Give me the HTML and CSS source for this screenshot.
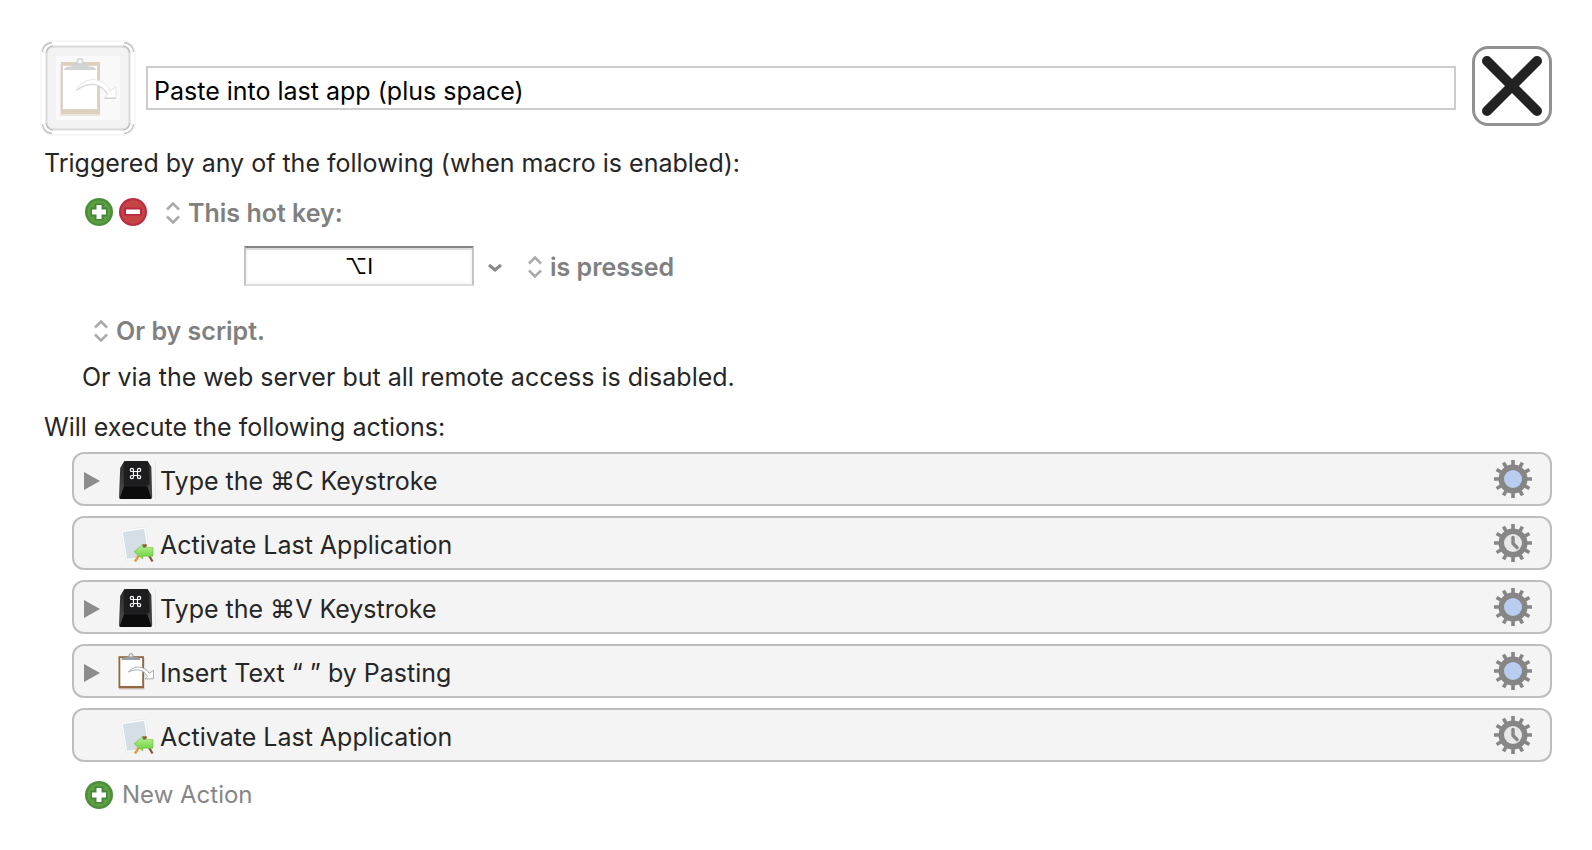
FILE: index.html
```
<!DOCTYPE html>
<html lang="en">
<head>
<meta charset="utf-8">
<title>Macro Editor</title>
<link rel="stylesheet" href="styles.css">
</head>
<body>
<svg class="defs" aria-hidden="true">
  <defs>
    <linearGradient id="arrowGreen" x1="0" y1="0" x2="0" y2="1">
      <stop offset="0" stop-color="#c6f2a0"/><stop offset=".5" stop-color="#8fe063"/><stop offset="1" stop-color="#66d038"/>
    </linearGradient>
    <linearGradient id="keySide" x1="0" y1="0" x2="0" y2="1">
      <stop offset="0" stop-color="#2c2c2d"/><stop offset="1" stop-color="#4c4c4d"/>
    </linearGradient>
    <symbol id="plus" viewBox="0 0 28 28">
      <circle cx="14" cy="14" r="14" fill="#4a8f3b"/>
      <circle cx="14" cy="14" r="11.5" fill="#5f9f41"/>
      <path d="M9.5 5.500h9v4h4v9h-4v4h-9v-4h-4v-9h4z" fill="#43883a"/>
      <path d="M11.500 7h5v4.500H21v5h-4.500V21h-5v-4.500H7v-5h4.500z" fill="#fff"/>
    </symbol>
    <symbol id="minus" viewBox="0 0 28 28">
      <circle cx="14" cy="14" r="14" fill="#ba2c43"/>
      <circle cx="14" cy="14" r="11.800" fill="#c54545"/>
      <path d="M5 9.500h18v8H5z" fill="#b7293f"/>
      <path d="M7 11.500h14v4.500H7z" fill="#fff"/>
    </symbol>
    <symbol id="updown" viewBox="0 0 14 22">
      <path d="M1 7.500l6-6 6 6M1 14.500l6 6 6-6" fill="none" stroke="#aaa" stroke-width="2.500"/>
    </symbol>
    <symbol id="gear" viewBox="-19 -19 38 38">
      <g stroke="#868686" stroke-width="3.600">
        <path id="spokes" d="M0-19V19M-19 0H19"/>
        <use href="#spokes" transform="rotate(30)"/>
        <use href="#spokes" transform="rotate(60)"/>
      </g>
      <circle r="14.500" fill="#868686"/>
    </symbol>
    <symbol id="gear-blue" viewBox="-19 -19 38 38">
      <use href="#gear" x="-19" y="-19" width="38" height="38"/>
      <circle r="9" fill="#bacdf0"/>
    </symbol>
    <symbol id="gear-clock" viewBox="-19 -19 38 38">
      <use href="#gear" x="-19" y="-19" width="38" height="38"/>
      <circle r="9" fill="#e8e8e8"/>
      <path d="M0-5.500V0.500l4 4" fill="none" stroke="#868686" stroke-width="3.400" stroke-linecap="round" stroke-linejoin="round"/>
    </symbol>
    <symbol id="key" viewBox="0 0 38 40">
      <path d="M7.500 0h21q1.500 0 2 1.200L33.300 6l.9 30q0 2-2 2H3q-2 0-2-2L2.200 7 5.500 1.200Q6 0 7.500 0z" fill="url(#keySide)"/>
      <path d="M7 23h21.500l5 14.300q-.5.700-1.500.7H3q-1 0-1.500-.7z" fill="#0c0c0d"/>
      <path d="M8 0h20q2 0 2.300 2l1.400 20q0 2.500-2.500 2.500H8.300Q5.500 24.500 5.700 22L6 2q.2-2 2-2z" fill="#1d1d1f"/>
      <path d="M7 24.800h23" stroke="#343436" stroke-width=".8"/>
      <path d="M15.500 10.500v-1.600a1.600 1.600 0 1 0-1.600 1.600h7.200a1.600 1.600 0 1 0-1.600-1.600v7.200a1.600 1.600 0 1 0 1.600-1.600h-7.200a1.600 1.600 0 1 0 1.600 1.600z" fill="none" stroke="#fff" stroke-width="1.200"/>
      <path d="M37.500 0v38" stroke="#e7e7e7"/>
    </symbol>
    <symbol id="activate" viewBox="0 0 38 40">
      <path d="M3 5.500L27.500 2 32 32.500 8 36z" fill="#fff" stroke="#e4e4e4" stroke-width=".6"/>
      <path d="M4.800 7L26.200 4l4.300 27L9 34z" fill="#d3dfe4"/>
      <path d="M28 19.500L17 36.500" stroke="#e79a36" stroke-width="2.400"/>
      <path d="M24.500 19.500l10 17" stroke="#87572e" stroke-width="2.200"/>
      <path d="M28 19.500l-1.500 2.300" stroke="#87572e" stroke-width="2.400"/>
      <path d="M16 26.800l8.800-7v2.600H35v8.800H24.800v2.800z" fill="url(#arrowGreen)" stroke="#6cbd47" stroke-width=".6"/>
    </symbol>
    <symbol id="clipboard" viewBox="0 0 38 40">
      <path d="M1 4h25.500v32.500H1z" fill="#8c7357" opacity=".35"/>
      <path d="M.5 3.200H26v32H.5z" fill="#93683c"/>
      <path d="M2.300 5h21.900v28H2.300z" fill="#fff"/>
      <path d="M3.500 7q0-2.800 4-2.800 3 0 3.200-1.700h4.600q.2 1.700 3.200 1.700 4 0 4 2.800z" fill="#999ea3"/>
      <circle cx="13" cy="2.400" r="1.900" fill="#e5e7e9" stroke="#9da2a6" stroke-width="1"/>
      <path d="M10.300 19C16 12 26.500 12.500 31.200 20.300l4.300-3v8.500h-8.500l2.500-2.500C25 16 18 15.500 10.300 19z" fill="#fff" stroke="#999" stroke-width=".8" stroke-linejoin="round"/>
    </symbol>
  </defs>
</svg>

<main class="editor">
  <header class="header">
    <button class="macro-icon" aria-label="Macro icon">
      <svg viewBox="0 0 96 96" aria-hidden="true">
        <rect x="1" y="1" width="94" height="94" rx="11" fill="#fff" stroke="#efefef"/>
        <rect x="6.500" y="6.500" width="83" height="83" rx="7" fill="#f3f3f3" stroke="#dadada" stroke-width="2"/>
        <path d="M2.500 12q1-8.500 9.500-9.500M84 2.500q8.500 1 9.500 9.500M93.500 84q-1 8.500-9.500 9.500M12 93.500q-8.500-1-9.500-9.500M6 13q1-6 7-7M83 6q6 1 7 7M90 83q-1 6-7 7M13 90q-6-1-7-7" fill="none" stroke="#c2c2c2" stroke-width="1.500"/>
        <rect x="16" y="16" width="64" height="64" fill="#f9f9f9"/>
        <path d="M20 24h40v52H20z" fill="#e9e6e2"/>
        <path d="M21 22h39v52H21z" fill="#dfcfbe"/>
        <path d="M22.500 25.500h35v44h-35z" fill="#fff" stroke="#d5d0ca" stroke-width=".8"/>
        <path d="M24 30q0-3.500 6-3.500 5 0 6-4h8q1 4 6 4 6 0 6 3.500z" fill="#d1d3d4"/>
        <circle cx="40" cy="21.500" r="2.800" fill="#f6f6f6" stroke="#d0d2d3" stroke-width="1.400"/>
        <path d="M36 51C43 38 62 36 70.500 52l5.500-4.500V59H64l3.500-4C60 43 50 42 36 51z" fill="#cfcfcf"/>
        <path d="M36 50C43 37 62 35 70.500 51l5.500-4.500V57.800H64.500l3.500-3.500C60 42 50 41 36 50z" fill="#fff" stroke="#dedede" stroke-width=".8"/>
      </svg>
    </button>
    <input class="macro-name" type="text" aria-label="Macro name" value="Paste into last app (plus space)">
    <button class="close" aria-label="Close">
      <svg viewBox="0 0 60 60" aria-hidden="true"><path d="M5 5l50 50M55 5L5 55" stroke="#222" stroke-width="10" stroke-linecap="round"/></svg>
    </button>
  </header>

  <section class="triggers">
    <h2 class="heading">Triggered by any of the following (when macro is enabled):</h2>
    <div class="trigger-row">
      <button class="round" aria-label="Add trigger"><svg aria-hidden="true"><use href="#plus"/></svg></button>
      <button class="round" aria-label="Remove trigger"><svg aria-hidden="true"><use href="#minus"/></svg></button>
      <label class="popup popup-type">
        <svg aria-hidden="true"><use href="#updown"/></svg>
        <select aria-label="Trigger type"><option>This hot key:</option></select>
      </label>
    </div>
    <div class="hotkey-row">
      <input class="hotkey" type="text" aria-label="Hot key" value="⌥I">
      <button class="chevron" aria-label="Hot key options">
        <svg viewBox="0 0 14 10" aria-hidden="true"><path d="M1 2l6 5 6-5" fill="none" stroke="#888" stroke-width="3"/></svg>
      </button>
      <label class="popup">
        <svg aria-hidden="true"><use href="#updown"/></svg>
        <select aria-label="Hot key event"><option>is pressed</option></select>
      </label>
    </div>
    <div class="script-row">
      <label class="popup">
        <svg aria-hidden="true"><use href="#updown"/></svg>
        <select aria-label="Script trigger"><option>Or by script.</option></select>
      </label>
    </div>
    <p class="web-note">Or via the web server but all remote access is disabled.</p>
  </section>

  <section class="execution">
    <h2 class="heading">Will execute the following actions:</h2>
    <ul class="actions">
      <li class="action">
        <button class="disclose" aria-label="Show details"></button>
        <svg class="action-icon" aria-hidden="true"><use href="#key"/></svg>
        <span class="action-title">Type the ⌘C Keystroke</span>
        <button class="gear" aria-label="Action options"><svg aria-hidden="true"><use href="#gear-blue"/></svg></button>
      </li>
      <li class="action">
        <svg class="action-icon" aria-hidden="true"><use href="#activate"/></svg>
        <span class="action-title">Activate Last Application</span>
        <button class="gear" aria-label="Action options"><svg aria-hidden="true"><use href="#gear-clock"/></svg></button>
      </li>
      <li class="action">
        <button class="disclose" aria-label="Show details"></button>
        <svg class="action-icon" aria-hidden="true"><use href="#key"/></svg>
        <span class="action-title">Type the ⌘V Keystroke</span>
        <button class="gear" aria-label="Action options"><svg aria-hidden="true"><use href="#gear-blue"/></svg></button>
      </li>
      <li class="action">
        <button class="disclose" aria-label="Show details"></button>
        <svg class="action-icon" aria-hidden="true"><use href="#clipboard"/></svg>
        <span class="action-title">Insert Text “ ” by Pasting</span>
        <button class="gear" aria-label="Action options"><svg aria-hidden="true"><use href="#gear-blue"/></svg></button>
      </li>
      <li class="action">
        <svg class="action-icon" aria-hidden="true"><use href="#activate"/></svg>
        <span class="action-title">Activate Last Application</span>
        <button class="gear" aria-label="Action options"><svg aria-hidden="true"><use href="#gear-clock"/></svg></button>
      </li>
    </ul>
    <button class="new-action">
      <svg aria-hidden="true"><use href="#plus"/></svg>
      New Action
    </button>
  </section>
</main>
</body>
</html>
```
FILE: styles.css
```
* {
  box-sizing: border-box;
}

body {
  margin: 0;
  background: #fff;
  color: #262626;
  font: 25px/32px Inter, "Liberation Sans", sans-serif;
}

button,
input,
select {
  margin: 0;
  padding: 0;
  border: 0;
  background: none;
  color: inherit;
  font: inherit;
}

svg {
  display: block;
}

.defs {
  position: absolute;
  width: 0;
  height: 0;
}

.editor {
  padding: 40px;
}

.header {
  display: flex;
  align-items: center;
}

.macro-icon,
.macro-icon svg {
  width: 96px;
  height: 96px;
}

.macro-name {
  flex: 1;
  min-width: 0;
  height: 44px;
  margin: 0 16px 0 10px;
  padding: 6px 6px 0;
  border: 2px solid #ccc;
  color: #000;
}

.close {
  display: grid;
  place-items: center;
  width: 80px;
  height: 80px;
  margin-bottom: 4px;
  border: 3px solid #929292;
  border-radius: 16px;
}

.close svg {
  width: 60px;
  height: 60px;
}

.heading {
  margin: 11px 0 0 4px;
  font-size: 25px;
  font-weight: 400;
}

.trigger-row,
.hotkey-row,
.script-row {
  display: flex;
  align-items: center;
}

.trigger-row {
  gap: 6px;
  margin: 16px 0 0 45px;
}

.round svg,
.new-action svg {
  width: 28px;
  height: 28px;
}

.popup {
  display: flex;
  align-items: center;
  gap: 8px;
  padding-top: 2px;
  color: #808080;
  font-weight: 600;
}

.popup svg {
  width: 14px;
  height: 22px;
}

.popup select {
  appearance: none;
}

.popup-type {
  margin-left: 13px;
}

.hotkey-row {
  margin: 17px 0 0 204px;
}

.hotkey {
  width: 230px;
  height: 40px;
  border: 2px solid #c4c4c4;
  border-top-color: #858585;
  border-bottom-color: #ddd;
  box-shadow: inset 0 2px #dcdcdc, inset 0 0 0 2px #f8f8f8;
  color: #000;
  font-size: 22px;
  text-align: center;
}

.chevron {
  margin: 4px 26px 0 14px;
}

.chevron svg {
  width: 14px;
  height: 10px;
}

.script-row {
  margin: 27px 0 0 54px;
}

.web-note {
  margin: 14px 0 0 42px;
}

.execution .heading {
  margin-top: 18px;
}

.actions {
  display: grid;
  gap: 10px;
  margin: 9px 0 0 32px;
  padding: 0;
  list-style: none;
}

.action {
  display: grid;
  grid-template-columns: 34px 42px 1fr 38px;
  align-items: center;
  height: 54px;
  padding: 0 18px 0 10px;
  border: 2px solid #bebebe;
  border-radius: 12px;
  background: #f4f4f4;
}

.disclose {
  width: 16px;
  height: 18px;
  margin-top: 4px;
  background: #8c8c8c;
  clip-path: polygon(0 0, 100% 50%, 0 100%);
}

.action-icon {
  grid-column: 2;
  width: 38px;
  height: 40px;
  margin-top: 4px;
}

.action-title {
  grid-column: 3;
  padding-top: 4px;
}

.gear svg {
  width: 38px;
  height: 38px;
}

.new-action {
  display: flex;
  align-items: center;
  gap: 9px;
  margin: 17px 0 0 45px;
  color: #868686;
  font-size: 24px;
}
```
